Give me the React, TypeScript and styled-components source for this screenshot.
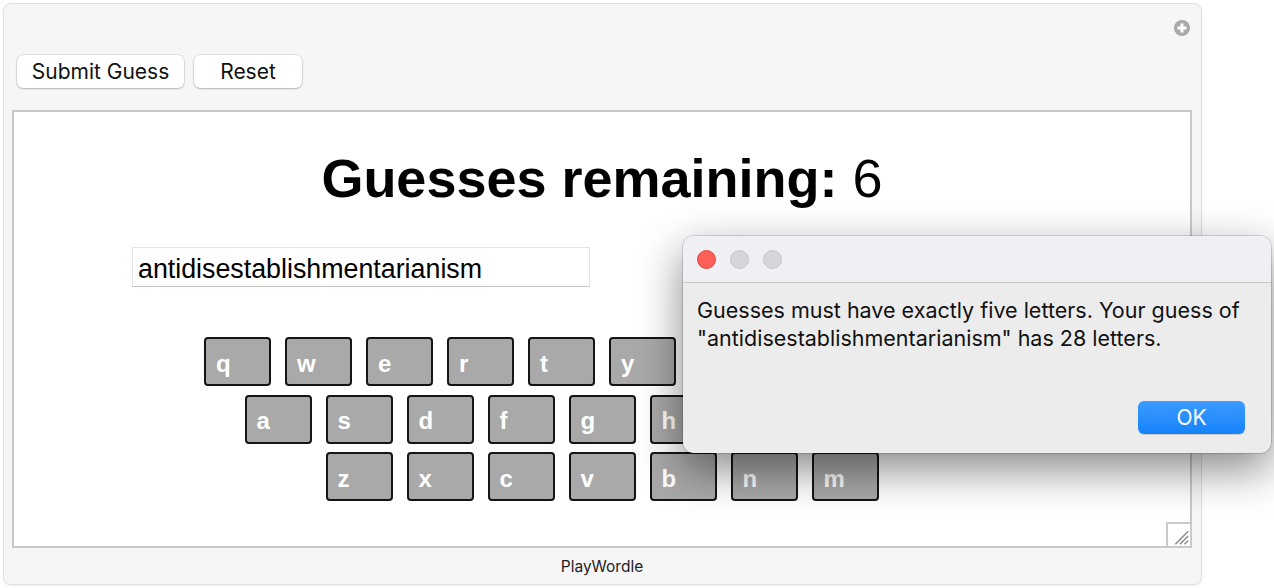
import * as React from 'react'
import styled, { createGlobalStyle } from 'styled-components'

const rows = ['qwertyuiop', 'asdfghjkl', 'zxcvbnm']

const GlobalStyle = createGlobalStyle`
  html, body {
    margin: 0;
    padding: 0;
    background: #ffffff;
    font-family: "Liberation Sans", Arial, sans-serif;
  }
`

export default function App() {
  return (
    <Page>
      <GlobalStyle />
      <Window>
        <IconRow>
          <AddIcon viewBox="0 0 16 16">
            <circle cx="8" cy="8" r="8" fill="#a9a9a9" />
            <rect x="6.5" y="3.5" width="3" height="9" fill="#fff" />
            <rect x="3.5" y="6.5" width="9" height="3" fill="#fff" />
          </AddIcon>
        </IconRow>
        <Toolbar>
          <ToolButton $width={167}>Submit Guess</ToolButton>
          <ToolButton $width={108}>Reset</ToolButton>
        </Toolbar>
        <Panel>
          <Title>
            Guesses remaining: <Count>6</Count>
          </Title>
          <InputRow>
            <GuessInput>antidisestablishmentarianism</GuessInput>
          </InputRow>
          <Keyboard>
            {rows.map((row) => (
              <KeyRow key={row}>
                {row.split('').map((letter) => (
                  <Key key={letter}>
                    <span>{letter}</span>
                  </Key>
                ))}
              </KeyRow>
            ))}
          </Keyboard>
          <Grip viewBox="0 0 24 24">
            <path d="M8 22 L22 8 M13 22 L22 13 M18 22 L22 18" stroke="#8a8a8a" strokeWidth="1.6" />
          </Grip>
        </Panel>
        <Footer>PlayWordle</Footer>
      </Window>

      <Dialog>
        <TitleBar>
          <Light $color="#fe5f57" $border="#e1463f" />
          <Light $color="#d6d5da" $border="#c6c5ca" />
          <Light $color="#d6d5da" $border="#c6c5ca" />
        </TitleBar>
        <DialogBody>
          <Message>
            Guesses must have exactly five letters. Your guess of
            <br />
            "antidisestablishmentarianism" has 28 letters.
          </Message>
          <Actions>
            <OkButton>OK</OkButton>
          </Actions>
        </DialogBody>
      </Dialog>
    </Page>
  )
}

// Styles
const Page = styled.div`
  position: relative;
  width: 1274px;
  height: 588px;
  padding: 3px 0 0 3px;
  box-sizing: border-box;
  overflow: hidden;
`

const Window = styled.div`
  width: 1199px;
  height: 582px;
  box-sizing: border-box;
  display: flex;
  flex-direction: column;
  background: #f6f6f6;
  border: 1px solid #e0e0e0;
  border-radius: 8px;
  box-shadow: 0 1px 3px rgba(0, 0, 0, 0.06);
  padding: 0 9px 0 8px;
`

const IconRow = styled.div`
  display: flex;
  justify-content: flex-end;
  padding: 16px 0 0;
`

const AddIcon = styled.svg`
  width: 16px;
  height: 16px;
  margin-right: 2px;
`

const Toolbar = styled.div`
  display: flex;
  gap: 10px;
  margin: 19px 0 0 5px;
`

const ToolButton = styled.button<{ $width: number }>`
  width: ${(p) => p.$width}px;
  height: 33px;
  background: #ffffff;
  border: none;
  border-radius: 6px;
  box-shadow: 0 0 0 0.5px rgba(0, 0, 0, 0.14), 0 1px 2px rgba(0, 0, 0, 0.22);
  font-family: Inter, "Liberation Sans", sans-serif;
  font-size: 21px;
  color: #111;
  padding: 0;
`

const Panel = styled.div`
  position: relative;
  margin-top: 22px;
  height: 438px;
  box-sizing: border-box;
  background: #ffffff;
  border: 2px solid #c9c9c9;
  display: flex;
  flex-direction: column;
`

const Title = styled.h1`
  margin: 38px 0 0;
  text-align: center;
  font-size: 54px;
  line-height: 56px;
  font-weight: bold;
  color: #000;
`

const Count = styled.span`
  font-weight: normal;
`

const InputRow = styled.div`
  display: flex;
  margin-top: 41px;
  padding-left: 118px;
`

const GuessInput = styled.div`
  width: 458px;
  height: 40px;
  box-sizing: border-box;
  border: 1px solid #e4e4e4;
  border-bottom-color: #c4c4c4;
  padding: 4px 0 0 5px;
  display: flex;
  align-items: center;
  font-size: 26.8px;
  color: #000;
`

const Keyboard = styled.div`
  display: flex;
  flex-direction: column;
  align-items: center;
  gap: 8.5px;
  margin-top: 50px;
`

const KeyRow = styled.div`
  display: flex;
  gap: 14px;
`

const Key = styled.div`
  width: 67px;
  height: 49px;
  box-sizing: border-box;
  background: #a9a9a9;
  border: 2px solid #151515;
  border-radius: 4px;
  display: flex;
  align-items: center;
  padding: 4px 0 0 10px;
  color: #ffffff;
  font-weight: bold;
  font-size: 24px;
  line-height: 1;
`

const Grip = styled.svg`
  position: absolute;
  right: 0;
  bottom: 0;
  width: 24px;
  height: 24px;
  box-sizing: border-box;
  border-left: 2px solid #c9c9c9;
  border-top: 2px solid #c9c9c9;
`

const Footer = styled.div`
  flex: 1;
  display: flex;
  align-items: center;
  justify-content: center;
  font-family: Inter, "Liberation Sans", sans-serif;
  font-size: 15.5px;
  color: #222;
`

const Dialog = styled.div`
  position: absolute;
  left: 683px;
  top: 236px;
  width: 588px;
  height: 217px;
  border-radius: 11px;
  overflow: hidden;
  display: flex;
  flex-direction: column;
  background: #ececec;
  box-shadow: 0 0 0 1px rgba(0, 0, 0, 0.14), 0 16px 45px rgba(0, 0, 0, 0.48);
`

const TitleBar = styled.div`
  height: 47px;
  box-sizing: border-box;
  display: flex;
  align-items: center;
  gap: 14px;
  padding: 0 0 0 14px;
  background: #f0eff4;
  border-bottom: 1px solid #c8c8c8;
`

const Light = styled.span<{ $color: string; $border: string }>`
  width: 19px;
  height: 19px;
  box-sizing: border-box;
  border-radius: 50%;
  background: ${(p) => p.$color};
  border: 1px solid ${(p) => p.$border};
`

const DialogBody = styled.div`
  flex: 1;
  display: flex;
  flex-direction: column;
  padding: 13px 26px 19px 14px;
`

const Message = styled.p`
  margin: 0;
  font-family: Inter, "Liberation Sans", sans-serif;
  font-size: 21.5px;
  line-height: 28px;
  color: #111;
`

const Actions = styled.div`
  margin-top: auto;
  display: flex;
  justify-content: flex-end;
`

const OkButton = styled.button`
  width: 107px;
  height: 33px;
  border: none;
  border-radius: 6px;
  background: linear-gradient(#3c9bff, #1683fb);
  box-shadow: 0 1px 1px rgba(0, 0, 0, 0.15);
  color: #ffffff;
  font-family: Inter, "Liberation Sans", sans-serif;
  font-size: 21px;
  padding: 0;
`
